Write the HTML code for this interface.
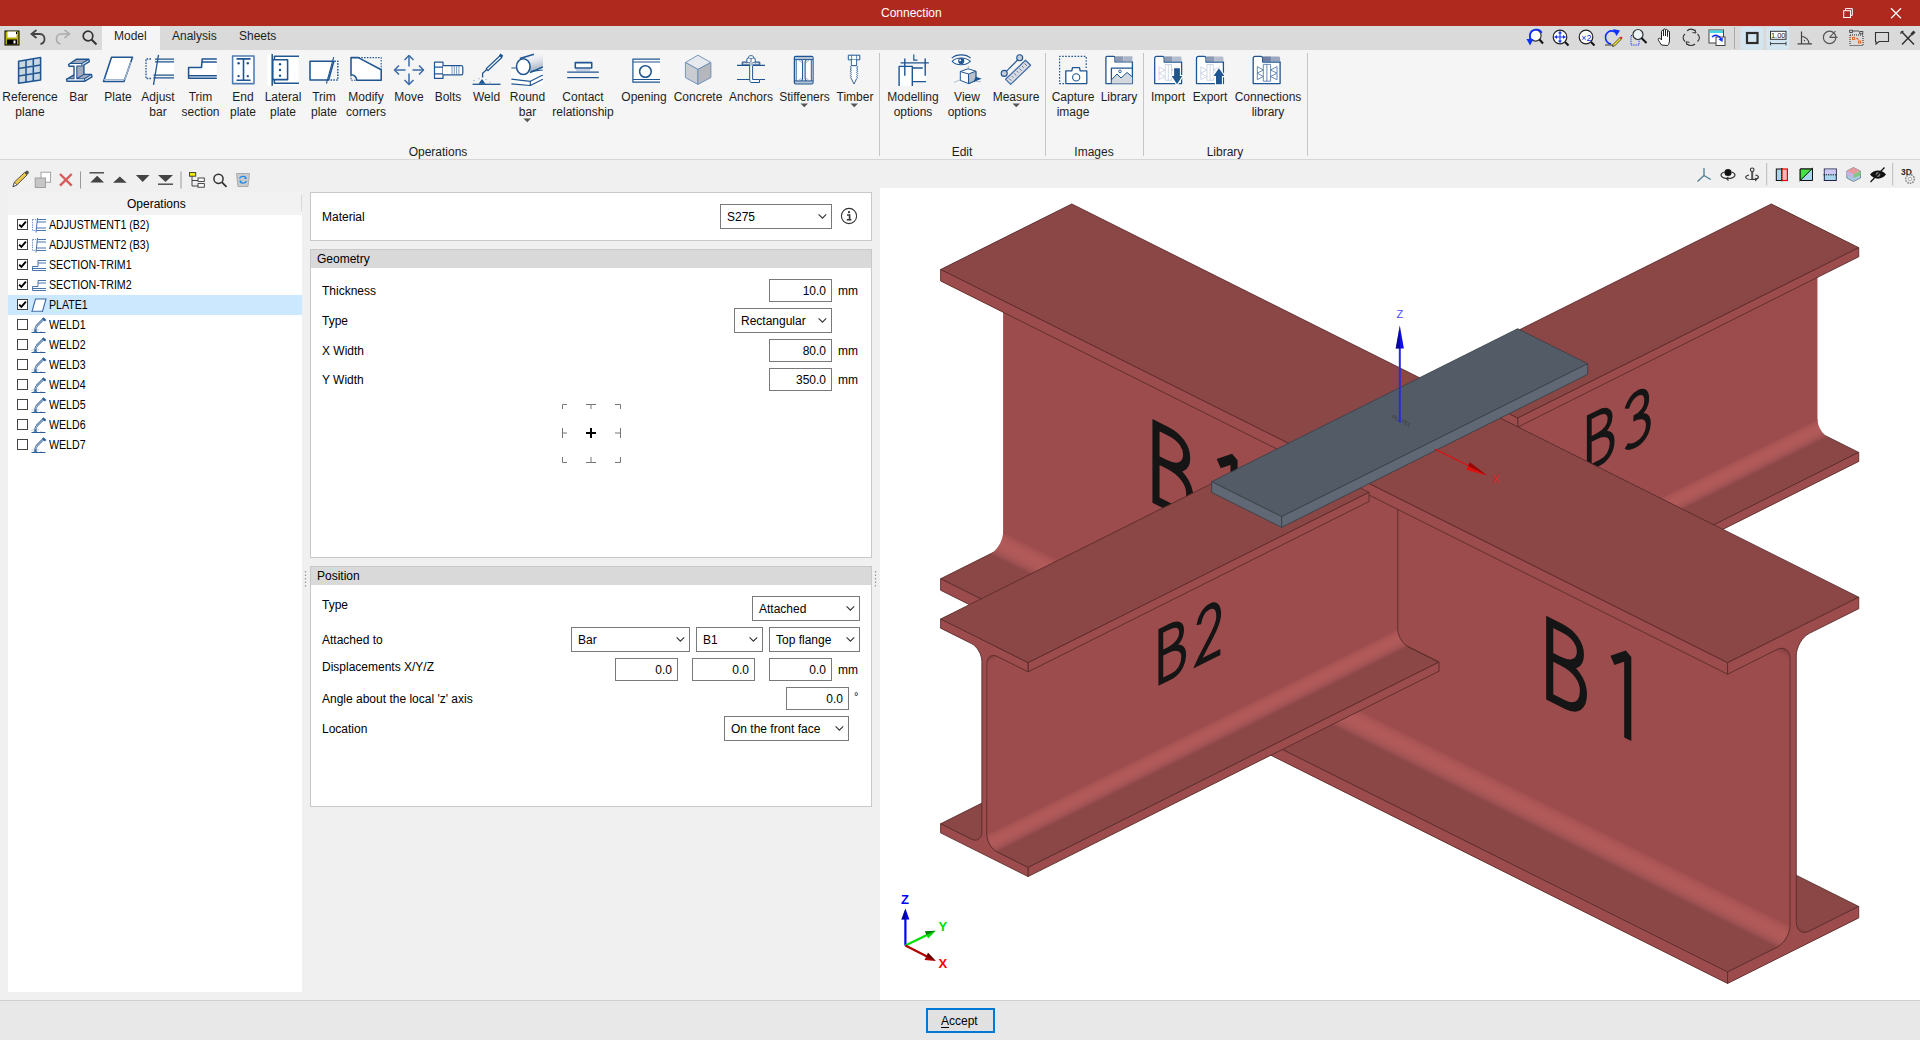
<!DOCTYPE html>
<html><head><meta charset="utf-8">
<style>
*{margin:0;padding:0;box-sizing:border-box}
html,body{width:1920px;height:1040px;overflow:hidden;background:#f0f0f0;font-family:"Liberation Sans",sans-serif;font-size:12px;color:#000}
.a{position:absolute}
svg.a{overflow:visible}
.t{position:absolute;white-space:nowrap;line-height:14px}
.rb{position:absolute;top:90px;width:100px;margin-left:-50px;text-align:center;line-height:15px;color:#1e1e1e;white-space:nowrap}
.grp{position:absolute;top:145px;width:120px;margin-left:-60px;text-align:center;color:#1e1e1e;line-height:14px}
.sep{position:absolute;top:53px;width:1px;height:103px;background:#c6c6c6}
.pan{position:absolute;background:#fff;border:1px solid #c8c8c8}
.hdr{position:absolute;background:#d9d9d9}
.inp{position:absolute;background:#fff;border:1px solid #7a7a7a;width:63px;height:23px}
.inp span{position:absolute;right:5px;top:4px;line-height:14px}
.cmb{position:absolute;background:#fff;border:1px solid #7a7a7a;height:25px}
.cmb span{position:absolute;left:6px;top:5px;line-height:14px}
.cmb i{position:absolute;right:5px;top:8px;width:10px;height:7px;background:no-repeat}
.cb{position:absolute;left:17px;width:11px;height:11px;border:1px solid #444;background:#fff}
.lt{position:absolute;left:49px;line-height:14px;transform:scaleX(0.885);transform-origin:0 0;white-space:nowrap}
.ic{position:absolute}
</style></head><body>
<svg width="0" height="0" style="position:absolute">
<defs>
<symbol id="chev" viewBox="0 0 10 7"><path d="M1.6,1.3 L5.4,5.1 L9.2,1.3" fill="none" stroke="#333" stroke-width="1.1"/></symbol>
<symbol id="chk" viewBox="0 0 11 11"><path d="M2.2,5.6 L4.4,7.9 L8.9,2.6" fill="none" stroke="#000" stroke-width="1.9"/></symbol>
<symbol id="weld" viewBox="0 0 16 16"><path d="M12.8,1.8 L6.2,8.3 C5,9.5 4.5,10.6 4.4,13.5" stroke="#2a5c96" stroke-width="2.3" fill="none"/><path d="M12.4,2.2 L6.2,8.3 C5.2,9.3 4.9,10.4 4.8,12.5" stroke="#fff" stroke-width="0.8" fill="none"/><path d="M11.8,1 L14.6,3.8" stroke="#2a5c96" stroke-width="2"/><path d="M0.5,15.5 H14.5" stroke="#2a5c96" stroke-width="1"/><path d="M2.3,14.8 L4.4,12.6 L6.6,14.8 Z" fill="#2a5c96"/><path d="M0.5,13.2 h1.2 M3,11.5 v1.5 M7.2,12 v1.5 M9.5,14.6 h1" stroke="#7a9cc6" stroke-width="0.7"/></symbol>
</defs></svg>

<!-- title bar -->
<div class="a" style="left:0;top:0;width:1920px;height:26px;background:#b0291e"></div>
<div class="t" style="left:881px;top:6px;color:#fff">Connection</div>
<svg class="a" style="left:1838px;top:6px" width="16" height="14"><rect x="5.7" y="4.7" width="6.8" height="6.8" fill="none" stroke="#fff" stroke-width="1"/><path d="M7.5,4.5 V2.6 H14.3 V9.4 H12.6" fill="none" stroke="#fff" stroke-width="1"/></svg>
<svg class="a" style="left:1888px;top:6px" width="14" height="14"><path d="M3,2.3 L13,12.2 M13,2.3 L3,12.2" stroke="#fff" stroke-width="1.2"/></svg>

<!-- tab strip -->
<div class="a" style="left:0;top:26px;width:1920px;height:24px;background:#dadada"></div>
<div class="a" style="left:102px;top:26px;width:58px;height:24px;background:#f5f5f5"></div>
<div class="t" style="left:114px;top:29px;color:#1e1e1e">Model</div>
<div class="t" style="left:172px;top:29px;color:#1e1e1e">Analysis</div>
<div class="t" style="left:239px;top:29px;color:#1e1e1e">Sheets</div>
<!-- quick access -->
<svg class="a" style="left:4px;top:30px" width="16" height="16"><rect x="1" y="1" width="14" height="14" fill="#b8b000" stroke="#000" stroke-width="1"/><rect x="3.5" y="1.5" width="9" height="6" fill="#fff"/><rect x="3" y="9.5" width="10" height="5" fill="#000"/><rect x="9.5" y="10.5" width="2" height="3" fill="#fff"/><rect x="12" y="2" width="1" height="2" fill="#000"/></svg>
<svg class="a" style="left:29px;top:29px" width="18" height="18"><path d="M4,5 H11 C14,5 15.5,7.5 15.5,10 C15.5,12.5 14,14.5 11.5,15" fill="none" stroke="#444" stroke-width="1.8"/><path d="M7.5,1 L2.5,5 L7.5,9" fill="none" stroke="#444" stroke-width="1.8"/></svg>
<svg class="a" style="left:54px;top:29px" width="18" height="18"><path d="M14,5 H7 C4,5 2.5,7.5 2.5,10 C2.5,12.5 4,14.5 6.5,15" fill="none" stroke="#aaa" stroke-width="1.6"/><path d="M10.5,1 L15.5,5 L10.5,9" fill="none" stroke="#aaa" stroke-width="1.6"/></svg>
<svg class="a" style="left:81px;top:29px" width="18" height="18"><circle cx="7" cy="7" r="4.8" fill="none" stroke="#333" stroke-width="1.7"/><path d="M10.5,10.5 L15.5,15.5" stroke="#333" stroke-width="1.9"/></svg>

<!-- right toolbar in tab strip -->
<!-- right toolbar in tab strip -->
<svg class="a" style="left:1520px;top:26px" width="400" height="24" viewBox="1520 26 400 24">
<!-- 1 zoom previous -->
<circle cx="1535.5" cy="35.5" r="5.6" fill="#fff" stroke="#333" stroke-width="1.2"/>
<path d="M1539.5,39.5 L1543,43.5" stroke="#111" stroke-width="2"/>
<path d="M1541.5,33 C1540,28 1531,28.5 1530,35 L1530,41.5" fill="none" stroke="#1030ff" stroke-width="1.8"/>
<path d="M1526.5,39 L1530,45.5 L1533.5,39 Z" fill="#1030ff"/>
<!-- 2 zoom all -->
<circle cx="1560" cy="37" r="6.8" fill="#fff" stroke="#222" stroke-width="1.2"/>
<path d="M1565,42 L1568.5,45.5" stroke="#111" stroke-width="2"/>
<path d="M1560,31.5 V42.5 M1554.5,37 H1565.5" stroke="#1030ff" stroke-width="1.1"/>
<path d="M1558,33.5 L1560,31 L1562,33.5 Z M1558,40.5 L1560,43 L1562,40.5 Z M1557,35 L1554.5,37 L1557,39 Z M1563,35 L1565.5,37 L1563,39 Z" fill="#1030ff"/>
<!-- 3 zoom x2 -->
<circle cx="1586" cy="37" r="6.8" fill="#fff" stroke="#222" stroke-width="1.2"/>
<path d="M1591,42 L1594.5,45.5" stroke="#111" stroke-width="2"/>
<text x="1586.5" y="40.5" font-family="Liberation Sans" font-size="9" fill="#1030ff" text-anchor="middle">×2</text>
<!-- 4 redraw -->
<path d="M1615,32 C1610,29 1605.5,33 1605.5,37 C1605.5,41 1608,43.5 1611,44" fill="none" stroke="#1030ff" stroke-width="1.6"/>
<path d="M1613,29 L1620,30.5 L1616.5,36 Z" fill="#1030ff"/>
<path d="M1605,45 H1614" stroke="#333" stroke-width="1"/>
<path d="M1613,44.5 L1620,37.5 L1621.5,39 L1614.5,46 L1612.5,46.5 Z" fill="#f0e020" stroke="#333" stroke-width="0.8"/>
<path d="M1619.5,37.5 L1621.3,36.5 L1622.5,37.7 L1621.5,39.2 Z" fill="#e02020"/>
<!-- 5 zoom window -->
<rect x="1631" y="35.5" width="8" height="9.5" fill="none" stroke="#1030ff" stroke-width="1" stroke-dasharray="1.2,1"/>
<circle cx="1638" cy="34.5" r="5" fill="#ecf4f8" stroke="#333" stroke-width="1.2"/>
<path d="M1641.5,38 L1646.5,43" stroke="#111" stroke-width="2"/>
<!-- 6 hand -->
<path d="M1661.5,45 C1659.5,42 1657.5,39.5 1658.5,38.5 C1659.5,37.5 1661,39 1661.5,40 V31.5 C1661.5,30 1663.5,30 1663.5,31.5 V36 V30 C1663.5,28.5 1665.5,28.5 1665.5,30 V36 V30.5 C1665.5,29 1667.5,29 1667.5,30.5 V36.5 V32 C1667.5,30.5 1669.5,30.5 1669.5,32 V40 C1669.5,43 1668.5,44.5 1667.5,45.5 Z" fill="#fff" stroke="#222" stroke-width="1"/>
<!-- 7 rotate -->
<path d="M1687,31 C1689,28.5 1693,28.5 1695,31 M1697.5,34 C1700,36 1700,39.5 1697.5,41.5 M1695,44 C1693,46 1689,46 1687,44 M1685,41.5 C1682.5,39.5 1682.5,36 1685,34" fill="none" stroke="#333" stroke-width="1.1"/>
<path d="M1695,29.5 L1696,33 L1692.5,32.5 M1687,45 L1686,41.8 L1689.5,42.3" fill="none" stroke="#333" stroke-width="1"/>
<!-- 8 window arrow -->
<rect x="1709" y="30" width="14.5" height="13" fill="#fff" stroke="#444" stroke-width="1"/>
<rect x="1709.5" y="30.5" width="13.5" height="2.5" fill="#40d8e8"/>
<rect x="1716" y="37" width="9" height="8.5" fill="#fff" stroke="#444" stroke-width="1"/>
<path d="M1712,37 C1715,34 1719,35.5 1721,39" fill="none" stroke="#1030ff" stroke-width="1.5"/>
<path d="M1718.5,39.5 L1722.5,42 L1722.8,37.5 Z" fill="#1030ff"/>
<!-- separator -->
<rect x="1734" y="27" width="1" height="22" fill="#aaa"/>
<!-- 9 highlighted square -->
<rect x="1740.5" y="27" width="22.5" height="22.8" rx="3" fill="#d4e6f1"/>
<rect x="1747" y="33" width="10.5" height="10" fill="none" stroke="#2d2d2d" stroke-width="2.2"/>
<!-- 10 highlighted 1.00 -->
<rect x="1766.5" y="27" width="22.8" height="22.8" rx="3" fill="#d4e6f1"/>
<rect x="1770.5" y="31.3" width="15.5" height="8" fill="#fff" stroke="#333" stroke-width="1"/>
<text x="1778.2" y="38.2" font-family="Liberation Sans" font-size="7.5" fill="#222" text-anchor="middle">1.00</text>
<path d="M1770.5,43.6 H1786 M1770.5,41.8 V45.4 M1786,41.8 V45.4" stroke="#333" stroke-width="0.9"/>
<!-- 11 angle -->
<path d="M1801.5,31.5 V43.8 M1797.5,43.8 H1812" stroke="#444" stroke-width="1.2" fill="none"/>
<path d="M1801.5,36.5 C1805.5,36.5 1809,40 1809,43.8" fill="none" stroke="#444" stroke-width="1.1"/>
<circle cx="1804.5" cy="40.5" r="0.7" fill="#444"/>
<!-- 12 circle -->
<circle cx="1829.6" cy="37.4" r="6.2" fill="none" stroke="#555" stroke-width="1.2"/>
<path d="M1829.6,37.4 H1837.5 M1829.6,37.4 L1835.5,31" stroke="#555" stroke-width="1.1"/>
<!-- 13 dotted rect -->
<rect x="1849.7" y="30.2" width="2.8" height="2.3" fill="none" stroke="#333" stroke-width="0.8"/>
<rect x="1859.8" y="31.5" width="3" height="2.3" fill="none" stroke="#333" stroke-width="0.8"/>
<path d="M1853,31 H1859" stroke="#333" stroke-width="0.8"/>
<rect x="1850" y="35" width="13" height="10.5" fill="none" stroke="#222" stroke-width="1" stroke-dasharray="1,1"/>
<rect x="1852.5" y="37.5" width="2.2" height="2" fill="none" stroke="#e06020" stroke-width="0.9"/>
<rect x="1858.5" y="41" width="2.2" height="2" fill="none" stroke="#e06020" stroke-width="0.9"/>
<path d="M1856,38.5 H1858 V40" fill="none" stroke="#e06020" stroke-width="0.9"/>
<!-- 14 speech -->
<path d="M1875.5,32.5 H1888.5 V41.5 H1879 L1876,44 V41.5 H1875.5 Z" fill="none" stroke="#333" stroke-width="1.1"/>
<!-- 15 tools -->
<path d="M1902,32 L1914,44.5 M1913.5,32.5 L1902,44.5" stroke="#333" stroke-width="1.5"/>
<path d="M1911.5,34.5 L1914.5,31.5" stroke="#333" stroke-width="2.8"/>
<path d="M1901,34 C1900.5,32 1902,30.8 1903.5,31.5" fill="none" stroke="#333" stroke-width="1.2"/>
</svg>

<!-- left toolbar -->
<svg class="a" style="left:0;top:164px" width="260" height="28" viewBox="0 164 260 28">
<path d="M13,186.8 L14.5,182 L24.5,172.5 L27,175 L17,184.8 Z" fill="#ecc94b" stroke="#444" stroke-width="0.9"/>
<path d="M13,186.8 L14.5,182.2 L17,184.8 Z" fill="#fff" stroke="#444" stroke-width="0.8"/>
<path d="M24.5,172.5 L26,171 C26.5,170.5 27.5,170.5 28,171 L28.5,171.5 C29,172 29,173 28.5,173.5 L27,175 Z" fill="#555"/>
<rect x="41" y="172.2" width="9.6" height="10" fill="#fff" stroke="#999" stroke-width="0.9"/>
<rect x="35.2" y="178" width="10.2" height="9.5" fill="#c4c6c8" stroke="#999" stroke-width="0.9"/>
<path d="M60,174 L71.7,185.7 M71.7,174 L60,185.7" stroke="#d85c5c" stroke-width="2.4"/>
<rect x="80" y="171.5" width="1" height="17" fill="#999"/>
<path d="M89.5,172.8 H104" stroke="#444" stroke-width="1.4"/>
<path d="M90.3,182.5 L97.2,175.8 L104,182.5 Z" fill="#444"/>
<path d="M113,182.8 L119.8,176.4 L126.7,182.8 Z" fill="#444"/>
<path d="M135.9,175.1 L142.7,182.1 L149.5,175.1 Z" fill="#444"/>
<path d="M158,175.1 L165.5,182 L173,175.1 Z" fill="#444"/>
<path d="M158,184.2 H173" stroke="#444" stroke-width="1.4"/>
<rect x="180.5" y="171.5" width="1" height="17" fill="#999"/>
<rect x="189.5" y="172.6" width="6.2" height="3.6" fill="#f0f000" stroke="#333" stroke-width="0.9"/>
<path d="M192,176.3 V186 H198 M192,180.5 H198" fill="none" stroke="#333" stroke-width="0.9"/>
<rect x="198" y="178" width="6.3" height="3.4" fill="#fff" stroke="#333" stroke-width="0.9"/>
<rect x="198" y="183.6" width="6.3" height="3.6" fill="#fff" stroke="#333" stroke-width="0.9"/>
<circle cx="218.5" cy="178.8" r="4.6" fill="none" stroke="#333" stroke-width="1.5"/>
<path d="M221.8,182.2 L226.5,186.8" stroke="#333" stroke-width="1.8"/>
<path d="M236.5,173.5 H249.5 L248,186.5 H238 Z" fill="#c8cacc" stroke="#a4a6a8" stroke-width="0.9"/>
<path d="M239.5,178.5 C240.5,176 245,175.5 246,178 M246.5,181 C245.5,183.5 241,184 240,181.5" fill="none" stroke="#1e88e5" stroke-width="1.3"/>
<path d="M245,176.5 L247,178.8 L244.3,179 Z M241,183 L239,180.7 L241.7,180.5 Z" fill="#1e88e5"/>
</svg>

<!-- viewport toolbar -->
<svg class="a" style="left:1680px;top:160px" width="240" height="28" viewBox="1680 160 240 28">
<path d="M1704,168 V175.5 L1697.5,181.5 M1704,175.5 L1710.7,179.5" fill="none" stroke="#4b7d96" stroke-width="1.3"/>
<circle cx="1728" cy="172.5" r="3.6" fill="#111"/>
<path d="M1724.5,172 C1719,173.5 1720,178.5 1728,178.5 C1736,178.5 1737,173.5 1731.5,172" fill="none" stroke="#333" stroke-width="1.2"/>
<path d="M1728.5,176.8 L1726.5,178.5 L1728.5,180.5" fill="none" stroke="#333" stroke-width="1.1"/>
<circle cx="1752.2" cy="169.8" r="1.8" fill="none" stroke="#333" stroke-width="1.1"/>
<path d="M1752.2,171.5 V180" stroke="#555" stroke-width="2"/>
<path d="M1749,175 C1744,176 1744.5,179.5 1752,179.5 C1759.5,179.5 1760,176 1755.5,175" fill="none" stroke="#333" stroke-width="1.2"/>
<path d="M1755,178 L1757,179.5 L1755,181" fill="none" stroke="#333" stroke-width="1"/>
<rect x="1766.2" y="163" width="1" height="22.5" fill="#bbb"/>
<rect x="1776.3" y="169" width="5.5" height="11.5" fill="#a8d4ec" stroke="#111" stroke-width="1"/>
<rect x="1781.8" y="169" width="5.6" height="11.5" fill="#f4b8b8" stroke="#e00" stroke-width="1.2"/>
<path d="M1781.8,168 V181.5" stroke="#111" stroke-width="1" stroke-dasharray="1.2,1"/>
<path d="M1800.2,169 H1812.5 V180.5 H1800.2 Z" fill="#a8d4ec" stroke="#111" stroke-width="1"/>
<path d="M1800.2,180.5 V169 H1812.5 Z" fill="#44e044"/>
<path d="M1800.2,169 H1812.5 M1800.2,169 V180.5 M1799.5,181.2 L1813,167.8" stroke="#111" stroke-width="1" fill="none"/>
<rect x="1824.3" y="169" width="12" height="11.5" fill="#a8d4ec" stroke="#224" stroke-width="1"/>
<rect x="1824.8" y="169.5" width="11" height="4.8" fill="#cfc8f4"/>
<path d="M1823.5,174.8 H1837" stroke="#111" stroke-width="1" stroke-dasharray="1.3,1"/>
<path d="M1853.5,167.5 L1860.5,171 V178 L1853.5,181.5 L1846.8,178 V171 Z" fill="#a8cce4" stroke="#6a7a8a" stroke-width="0.8"/>
<path d="M1853.5,167.5 L1860.5,171 L1853.5,174.3 L1846.8,171 Z" fill="#e89a9a"/>
<path d="M1846.8,171 V175 L1853.5,178.3 V174.3 Z" fill="#c8b0e8"/>
<path d="M1860.5,171 V175 L1853.5,178.3 V174.3 Z" fill="#80c880"/>
<path d="M1870,174.5 C1874,169 1882,169 1886,174.5 C1882,180 1874,180 1870,174.5 Z" fill="#111"/>
<circle cx="1878" cy="174.5" r="2.4" fill="#777"/>
<path d="M1870.5,182 L1884.5,167.5" stroke="#111" stroke-width="1.2"/>
<rect x="1892.2" y="163" width="1" height="22.5" fill="#bbb"/>
<text x="1901" y="175" font-family="Liberation Sans" font-weight="bold" font-size="8.5" fill="#222">3D</text>
<circle cx="1910" cy="179" r="4.3" fill="none" stroke="#888" stroke-width="1.6" stroke-dasharray="1.6,1"/>
<circle cx="1910" cy="179" r="1.8" fill="none" stroke="#aaa" stroke-width="0.9"/>
</svg>


<!-- ribbon -->
<div class="a" style="left:0;top:50px;width:1920px;height:109px;background:#f5f5f5"></div>
<div class="a" style="left:0;top:159px;width:1920px;height:1px;background:#d6d6d6"></div>
<svg class="a" style="left:0;top:50px" width="1920" height="110" viewBox="0 50 1920 110">
<g fill="none" stroke="#1f5591" stroke-width="1.55" stroke-linejoin="round">
<!-- Reference plane -->
<path d="M18.6,61.3 L40.6,57.6 V79.9 L18.6,83.2 Z" fill="#c9d6e4"/>
<path d="M26,60.1 V82.1 M33.3,58.8 V81 M18.6,68.6 L40.6,65.1 M18.6,75.9 L40.6,72.5"/>
<!-- Bar -->
<path d="M69.4,63.5 L76.5,59.2 H88.8 L81.7,63.5 Z M76.8,66 L83.9,61.7 V74.4 L76.8,78.7 Z M76.8,78.7 L83.9,74.4 H91.4 L84.3,78.7 Z M66.5,79.3 L74,74.8 V78.7 Z" fill="#a2aabb" stroke="none"/>
<path d="M81.7,63.5 L88.8,59.2 L89.3,61.7 L82.2,66 Z M84.3,78.7 L91.4,74.4 L92,76.9 L84.9,81.2 Z" fill="#dfe3ea" stroke="none"/>
<path d="M69.4,63.5 H81.7 L82.2,66 H76.8 V78.7 H84.3 L84.9,81.2 H67 L66.5,79.3 H74 V66.2 H69 Z" fill="#fff" stroke="none"/>
<path d="M69,66.2 L68.6,64.5 L76.5,59.2 H88.8 L89.3,61.7 L83.9,65 V74.4 H91.4 L92,76.9 L84.9,81.2 H67 L66.5,79.3 L74,74.8 V66.2 Z" stroke-width="1.4"/>
<path d="M69.4,63.5 H81.7 L88.8,59.2 M81.7,63.5 L82.2,66 H76.8 V78.7 L83.9,74.4 M76.8,78.7 H84.3 L91.4,74.4 M84.3,78.7 L84.9,81.2 M74,74.8 V78.7 H66.5" stroke-width="1.1"/>
<!-- Plate -->
<path d="M111.5,57.3 H132.5 L124,81.4 H103.5 Z" fill="#fff"/>
<path d="M103.7,79.7 H124.3 M130.7,62 L124.8,79.7" stroke="#a4b6cf" stroke-width="1.2"/>
<!-- Adjust bar -->
<path d="M155,62.5 H174 V74.5 H153.5 Z" fill="#fff" stroke="none"/>
<path d="M151,59 H146 V78.5 H151" stroke-dasharray="1.6,1.2" stroke-linejoin="miter" stroke-width="1.3"/>
<path d="M155,59.2 H174 M155,61.8 H174 M153.5,75.2 H174 M153.3,77.8 H174" stroke-width="1.2"/>
<path d="M158.5,54.8 L153.5,84.8" stroke-width="1.3"/>
<!-- Trim section -->
<path d="M188.6,67.5 H201.5 L202.2,59 H216.8 V78.3 H188.6 Z" fill="#fff" stroke="none"/>
<path d="M216.8,59 H202.2 L201.5,67.4 H188.6 V78.3 H216.8 M202.5,62 H216.8 M188.8,75.7 H216.8"/>
<!-- End plate -->
<rect x="232.6" y="56" width="21.4" height="27.6" fill="#fff" stroke="#4f7bb0"/>
<path d="M236.5,58.9 H250.6 M236.5,80.2 H250.6 M243.5,58.9 V80.2" stroke-width="1.6"/>
<g fill="#1f5591" stroke="none"><circle cx="238.6" cy="63.3" r="1.2"/><circle cx="247.8" cy="63.3" r="1.2"/><circle cx="238.6" cy="76.1" r="1.2"/><circle cx="247.8" cy="76.1" r="1.2"/></g>
<!-- Lateral plate -->
<rect x="267.5" y="54.5" width="31" height="31" fill="#fff" stroke="none"/>
<path d="M272.2,54 V85.8 M299,56.3 H274.4 V59.4 M299,83.2 H274.4 V79.5"/>
<rect x="272.8" y="59.8" width="14.8" height="19.8" fill="#fff"/>
<g fill="#1f5591" stroke="none"><circle cx="280" cy="64.2" r="1.2"/><circle cx="280" cy="70" r="1.2"/><circle cx="280" cy="75.7" r="1.2"/></g>
<!-- Trim plate -->
<path d="M310,61.2 H333.8 L328.6,80 H310 Z" fill="#fff"/>
<path d="M333.7,57.2 L326.4,83.7" stroke-width="1.1"/>
<path d="M334.3,61.2 H337.8 V80 H329" stroke-dasharray="1.5,1.3"/>
<!-- Modify corners -->
<path d="M351,57.6 H358.3 L381.2,69.7 V80.3 H356.7 C356.7,77.2 354.2,74.7 351,74.7 Z" fill="#fff"/>
<path d="M358.5,57.6 H381.2 V69.5 M351,75 V80.3 H356.5" stroke-dasharray="1.5,1.3" stroke-width="1.1"/>
<!-- Move -->
<g stroke="#3b69a6" stroke-width="1.5">
<path d="M409,55.8 V66.5 M409,73.5 V84 M394.8,70 H405.5 M412.5,70 H423.2"/>
<path d="M404.5,60 L409,55.5 L413.5,60 M404.5,80 L409,84.5 L413.5,80 M399,65.5 L394.5,70 L399,74.5 M419,65.5 L423.5,70 L419,74.5"/>
</g>
<!-- Bolts -->
<path d="M434.5,62.2 H443 V78.4 H434.5 Z M434.5,67.2 H443 M434.5,73.8 H443" fill="#fff" stroke-width="1.2"/>
<path d="M443,65.6 H461.5 C462.5,65.6 462.8,66.5 462.8,67.5 V73 C462.8,74 462.5,74.9 461.5,74.9 H443" fill="#fff" stroke-width="1.2"/>
<path d="M452,65.8 V74.8 M454.3,65.8 V74.8 M456.6,65.8 V74.8 M458.9,65.8 V74.8" stroke-width="0.8" stroke="#5a82b5"/>
<!-- Weld -->
<path d="M501.8,57.5 L488,70.5 L486.2,68.8 L500,55.7 Z" fill="#fff" stroke-width="1.2"/>
<path d="M502.5,56.8 L499.7,54.5" stroke-width="2.6"/>
<path d="M486.8,69.6 L482.6,73.2 V77.5" stroke-width="1.3"/>
<path d="M472.6,84.3 H500.5" stroke-width="1.3"/>
<path d="M478.5,83.8 L482,79 L485.5,83.8 Z" fill="#1f5591" stroke="none"/>
<path d="M473.5,80.6 h1.2 M478.5,78.7 h1 M485.5,79.6 h1 M489.5,82.2 h1" stroke-width="0.9" stroke="#6a8fc0"/>
<!-- Round bar -->
<path d="M511.4,68 L529,62 V66 L542.8,66.5 V84 L532,85.5 L511.4,84 Z" fill="#fff" stroke="none"/>
<path d="M519.5,58.3 L534.2,54 L543,54.5 V67.5 L530,72.5 Z" fill="url(#rbg)" stroke="none"/>
<path d="M519.8,58.5 L534,54.2 M530,72.6 L542.8,67"/>
<ellipse cx="523.3" cy="66.6" rx="6.8" ry="7.9" fill="#fff"/>
<path d="M511.4,68 H516.5 M511.4,79.2 L530.3,81.3 L542.8,75 M511.4,83.8 L530.3,85.5 L542.8,79.2 M530.3,81.3 V85.5 M531,71.4 L542.8,70" stroke-width="1.2"/>
<!-- Contact -->
<rect x="575.3" y="62.6" width="16.4" height="5.3" fill="#fff"/>
<path d="M567.2,72.1 H598.8 M567.2,77.6 H598.8" stroke-width="1.3"/>
<path d="M577,68.5 V71.5 M579,68.5 V71.5 M581,68.5 V71.5 M583,68.5 V71.5 M585,68.5 V71.5 M587,68.5 V71.5 M589,68.5 V71.5" stroke-width="0.7" stroke="#6a8fc0"/>
<!-- Opening -->
<rect x="632.8" y="58.8" width="27.2" height="23.6" fill="#fff" stroke="none"/>
<path d="M660,59.2 H632.9 V82.2 H660 M633,62 H660 M633,79.5 H660" stroke-width="1.2"/>
<path d="M633,62.5 H660 V79 H633 Z" fill="none" stroke="none"/>
<circle cx="645.4" cy="71.5" r="5.8"/>
<!-- Concrete -->
<path d="M697.9,55.2 L710.9,62.5 L697.9,69.4 L685.4,62.5 Z" fill="#e6eaee" stroke="#6a8cb8" stroke-width="0.9"/>
<path d="M685.4,62.5 V77.6 L697.9,84.4 V69.4 Z" fill="#c9ccd0" stroke="#6a8cb8" stroke-width="0.9"/>
<path d="M710.9,62.5 V77.6 L697.9,84.4 V69.4 Z" fill="#b4b8bd" stroke="#6a8cb8" stroke-width="0.9"/>
<!-- Anchors -->
<path d="M737,65.3 H765 M737,79.5 H749.7 M759.5,79.5 H765" stroke-width="1.2"/>
<path d="M749.7,65.7 V80.3 C749.7,81.8 750.5,82.5 752,82.5 H759.5 V79.5 H752.6 V65.7" fill="#fff" stroke-width="1"/>
<rect x="742.2" y="62" width="17.6" height="3" fill="#a9b6c9" stroke-width="1"/>
<path d="M744,63.5 h2 M747,63.5 h2 M753,63.5 h2 M756,63.5 h2" stroke="#fff" stroke-width="0.6"/>
<rect x="750" y="61.5" width="2.6" height="4.5" fill="#b8c4d6" stroke="none"/>
<path d="M746.9,62 V59.2 C746.9,58.4 747.4,58 748.2,58 H753.9 C754.6,58 755.2,58.4 755.2,59.2 V62" fill="#fff" stroke-width="1"/>
<path d="M748.7,58 V56.8 C748.7,56 749.3,55.7 751,55.7 C752.7,55.7 753.3,56 753.3,56.8 V58 M751,58 V62" fill="#fff" stroke-width="0.9"/>
<!-- Stiffeners -->
<rect x="794.4" y="56.4" width="18.6" height="27.4" rx="1.2" fill="#fff" stroke-width="1.3"/>
<path d="M795,57 H812.5 V59.3 H795 Z M795,81 H812.5 V83.3 H795 Z M811.4,59.5 H812.6 V81 H811.4 Z" fill="#b4c2d4" stroke="none"/>
<path d="M794.6,59.6 H813 M794.6,80.9 H813" stroke-width="1"/>
<path d="M796.2,59.6 V80.9 M811.3,59.6 V80.9" stroke-width="0.9"/>
<path d="M801.2,59.6 C802.3,60.3 802.6,61 802.6,62 V78.5 C802.6,79.5 802.3,80.2 801.2,80.9 M806.4,59.6 C805.3,60.3 805.1,61 805.1,62 V78.5 C805.1,79.5 805.3,80.2 806.4,80.9" stroke-width="1.1"/>
<path d="M798.5,60 L801.5,62.5 M798.5,80.5 L801.5,78 M809,60 L806,62.5 M809,80.5 L806,78" stroke-width="0.7" stroke="#6a8cb8"/>
<!-- Timber -->
<path d="M848.3,55.2 H859.8 V59.8 H848.3 Z" fill="#fff" stroke-width="1"/>
<path d="M851.6,55.2 V59.8 M856.6,55.2 V59.8" stroke-width="0.7"/>
<path d="M851.4,59.8 V65.7 H856.6 V59.8" fill="#fff" stroke-width="0.9"/>
<path d="M851.4,65.7 L850.3,66.8 L851.4,67.9 L850.3,69 L851.4,70.1 L850.3,71.2 L851.4,72.3 L850.3,73.4 L851.4,74.5 L850.3,75.6 L851.4,76.7 L850.5,77.8 L851.6,78.9 L852.5,81 L854,84 L855.5,81 L856.4,78.9 L857.5,77.8 L856.6,76.7 L857.7,75.6 L856.6,74.5 L857.7,73.4 L856.6,72.3 L857.7,71.2 L856.6,70.1 L857.7,69 L856.6,67.9 L857.7,66.8 L856.6,65.7 Z" fill="#fff" stroke-width="0.9"/>
<!-- Modelling options -->
<rect x="899" y="66.2" width="13.3" height="19.5" fill="#fff" stroke="none"/>
<rect x="912.3" y="68" width="13.7" height="13.6" fill="#fff" stroke="none"/>
<path d="M899.1,85.9 V66.4 H912.3 V85.9 M900.6,62.9 H928.8 M904.8,58.5 V75.8 M925.2,58.5 V75.8 M912.3,68 H922.8 M912.3,81.6 H926" stroke-width="1.4"/>
<path d="M913.8,54.5 V60.2 H917.5" stroke-width="1.2"/>
<!-- View options -->
<path d="M952.2,61.3 C956.5,56.8 965.7,56.8 970.3,61.3 C965.7,65.8 956.5,65.8 952.2,61.3 Z" fill="#fff" stroke-width="1.1"/>
<path d="M951.8,58.2 C956.5,53.8 965.8,53.8 970.7,58.2" stroke-width="1.1"/>
<circle cx="961.2" cy="61" r="3.1" fill="#1f5591" stroke="none"/><circle cx="960.2" cy="60.2" r="1" fill="#fff" stroke="none"/>
<path d="M968.3,66 V68.5" stroke="#9aa8bc" stroke-width="0.8"/>
<path d="M954,82.5 L960.3,79.8 M976,81.5 L981,81.7" stroke="#9aa8bc" stroke-width="0.7"/>
<path d="M960.3,71.5 L968,68.8 L975.9,71.2 V80.5 L968.7,83.6 L960.3,80.4 Z" fill="#fff" stroke-width="1"/>
<path d="M968.5,74 L975.9,71.2 V80.5 L968.7,83.6 Z" fill="#b8c0cc" stroke-width="1"/>
<path d="M960.3,71.5 L968.5,74 V83.6" stroke-width="1"/>
<path d="M973,82.2 L981.8,78.8 L975.9,76.7" fill="#1f5591" stroke="none"/>
<!-- Measure -->
<path d="M1005.6,79.3 L1025.5,60.2 L1030.6,65.2 L1010.7,84.4 Z" fill="#d9dbde" stroke="#3c6aa8" stroke-width="1.2"/>
<path d="M1009,78.5 l2.2,2.2 M1011.6,76 l1.6,1.6 M1014.2,73.5 l2.2,2.2 M1016.8,71 l1.6,1.6 M1019.4,68.5 l2.2,2.2 M1022,66 l1.6,1.6 M1024.6,63.5 l2.2,2.2" stroke="#3c6aa8" stroke-width="0.9"/>
<path d="M1004.3,73.4 L1019.7,57.9" stroke-width="1.1"/>
<circle cx="1004.2" cy="73.4" r="3" fill="#c6ccd6" stroke-width="1.1"/><circle cx="1019.7" cy="57.8" r="3" fill="#c6ccd6" stroke-width="1.1"/>
<!-- Capture image -->
<path d="M1064,83.6 H1059.6 V56.4 H1086.2 V68" stroke-dasharray="1.6,1.5" stroke-width="1.2"/>
<path d="M1065.8,70.8 H1071.8 L1072.5,67.7 H1079.5 L1080.2,70.8 H1086.8 V83.6 H1065.8 Z" fill="#fff" stroke-width="1.3"/>
<circle cx="1076.2" cy="77.4" r="3.6" stroke-width="1.1"/>
<!-- Library (images) -->
<path d="M1105.9,83.6 V57.5 C1105.9,56.8 1106.4,56.3 1107,56.3 H1113.7 C1114.5,56.3 1115,56.9 1115,57.7 V61.9 H1132.4 V83.6 Z" fill="#fff" stroke-width="1.3"/>
<path d="M1115.3,56.3 H1123.5 V61.5 H1115.3 Z" fill="#8c9ab4" stroke="none"/>
<path d="M1123.8,56.3 H1132.4 V61.5 H1123.8 Z" fill="#aab4c6" stroke="none"/>
<path d="M1111.4,83.6 V68.2 H1132.4" stroke-width="1.3"/>
<path d="M1111.8,79.5 L1117,74 L1121,78 L1127,72.5 L1132.2,76.8 V83.4 H1111.8 Z" fill="#d3d7de" stroke="none"/>
<path d="M1111.8,79.5 L1117,74 L1121,78 L1127,72.5 L1132.2,76.8" stroke-width="1"/>
<circle cx="1120" cy="71.4" r="1.3" stroke-width="0.9"/>
<!-- Import / Export / Connections library folders -->
<g id="fold">
<path d="M1154.7,83.6 V58.5 C1154.7,57.2 1155.6,56.4 1156.8,56.4 H1162.2 C1163.4,56.4 1164.2,57.2 1164.2,58.5 V62 H1181.6 V83.6 Z" fill="#fff" stroke-width="1.3"/>
<path d="M1164.5,56.4 H1172.4 V61.4 H1164.5 Z" fill="#8e9ab4" stroke="none"/>
<path d="M1172.4,56.4 H1180.2 C1181,56.4 1181.6,57 1181.6,57.8 V61.4 H1172.4 Z" fill="#b4bccd" stroke="none"/>
<path d="M1165.2,64.5 H1171.5 V80.3 H1165.2 Z M1168.3,64.5 V80.3 M1159,66.8 L1165,70 L1159,73.2 L1165,76.5 L1159,79.5 M1159,66.8 V79.5 M1177.7,66.8 L1171.5,70 L1177.7,73.2 L1171.5,76.5 L1177.7,79.5 M1177.7,66.8 V79.5" fill="none" stroke="#c3cde0" stroke-width="0.8"/>
</g>
<path d="M1174.1,68.3 H1179.9 V76.1 H1182.3 L1177,84.3 L1171.7,76.1 H1174.1 Z" fill="#1f5591" stroke="#fff" stroke-width="2.2"/><path d="M1174.1,68.3 H1179.9 V76.1 H1182.3 L1177,84.3 L1171.7,76.1 H1174.1 Z" fill="#1f5591" stroke="none"/>
<use href="#fold" transform="translate(41.8,0)"/>
<path d="M1218.9,68.3 L1224.4,76.1 H1221.9 V84.3 H1216 V76.1 H1213.5 Z" fill="#1f5591" stroke="#fff" stroke-width="2.2"/><path d="M1218.9,68.3 L1224.4,76.1 H1221.9 V84.3 H1216 V76.1 H1213.5 Z" fill="#1f5591" stroke="none"/>
<g transform="translate(98.5,0)">
<path d="M1154.7,83.6 V58.5 C1154.7,57.2 1155.6,56.4 1156.8,56.4 H1162.2 C1163.4,56.4 1164.2,57.2 1164.2,58.5 V62 H1181.6 V83.6 Z" fill="#fff" stroke-width="1.3"/>
<path d="M1164.5,56.4 H1172.4 V61.4 H1164.5 Z" fill="#6e7fa3" stroke="none"/>
<path d="M1172.4,56.4 H1180.2 C1181,56.4 1181.6,57 1181.6,57.8 V61.4 H1172.4 Z" fill="#9aa6bf" stroke="none"/>
<path d="M1164.8,64.4 H1172.1 V81.2 H1164.8 Z M1168.4,64.4 V81.2 M1158.8,66.6 L1164.8,70 L1158.8,73.2 L1164.8,76.5 L1158.8,79.7 M1158.8,66.6 V79.7 M1178.5,66.6 L1172.1,70 L1178.5,73.2 L1172.1,76.5 L1178.5,79.7 M1178.5,66.6 V79.7" fill="none" stroke="#5a7cb0" stroke-width="0.9"/>
</g>
</g>
<defs><linearGradient id="rbg" x1="0" y1="0" x2="0.3" y2="1"><stop offset="0" stop-color="#fff"/><stop offset="0.5" stop-color="#e4e8ee"/><stop offset="1" stop-color="#a8b2c2"/></linearGradient></defs>
</svg>

<div class="rb" style="left:30px">Reference<br>plane</div>
<div class="rb" style="left:78.5px">Bar</div>
<div class="rb" style="left:118px">Plate</div>
<div class="rb" style="left:158px">Adjust<br>bar</div>
<div class="rb" style="left:200.5px">Trim<br>section</div>
<div class="rb" style="left:243px">End<br>plate</div>
<div class="rb" style="left:283px">Lateral<br>plate</div>
<div class="rb" style="left:324px">Trim<br>plate</div>
<div class="rb" style="left:366px">Modify<br>corners</div>
<div class="rb" style="left:409px">Move</div>
<div class="rb" style="left:448px">Bolts</div>
<div class="rb" style="left:486.5px">Weld</div>
<div class="rb" style="left:527.5px">Round<br>bar</div>
<div class="rb" style="left:583px">Contact<br>relationship</div>
<div class="rb" style="left:644px">Opening</div>
<div class="rb" style="left:698px">Concrete</div>
<div class="rb" style="left:751px">Anchors</div>
<div class="rb" style="left:804.5px">Stiffeners</div>
<div class="rb" style="left:855px">Timber</div>
<div class="rb" style="left:913px">Modelling<br>options</div>
<div class="rb" style="left:967px">View<br>options</div>
<div class="rb" style="left:1016px">Measure</div>
<div class="rb" style="left:1073px">Capture<br>image</div>
<div class="rb" style="left:1119px">Library</div>
<div class="rb" style="left:1168px">Import</div>
<div class="rb" style="left:1210px">Export</div>
<div class="rb" style="left:1268px">Connections<br>library</div>
<svg class="a" style="left:523px;top:118px" width="9" height="5"><path d="M0.5,0.5 H8 L4.25,4.2 Z" fill="#555"/></svg>
<svg class="a" style="left:800px;top:103px" width="9" height="5"><path d="M0.5,0.5 H8 L4.25,4.2 Z" fill="#555"/></svg>
<svg class="a" style="left:850px;top:103px" width="9" height="5"><path d="M0.5,0.5 H8 L4.25,4.2 Z" fill="#555"/></svg>
<svg class="a" style="left:1012px;top:103px" width="9" height="5"><path d="M0.5,0.5 H8 L4.25,4.2 Z" fill="#555"/></svg>
<div class="grp" style="left:438px">Operations</div>
<div class="grp" style="left:962px">Edit</div>
<div class="grp" style="left:1094px">Images</div>
<div class="grp" style="left:1225px">Library</div>
<div class="sep" style="left:879px"></div>
<div class="sep" style="left:1045px"></div>
<div class="sep" style="left:1143px"></div>
<div class="sep" style="left:1307px"></div>

<!-- left toolbar -->


<!-- operations list -->
<div class="a" style="left:8px;top:192px;width:294px;height:23px;background:#f2f2f2"></div>
<div class="a" style="left:301px;top:195px;width:1px;height:16px;background:#d8d8d8"></div>
<div class="t" style="left:127px;top:197px">Operations</div>
<div class="a" style="left:8px;top:215px;width:294px;height:777px;background:#fff"></div>
<div class="a" style="left:8px;top:295px;width:294px;height:20px;background:#cce8ff"></div>
<div class="cb" style="top:219px"><svg class="a" style="left:-1px;top:-1px" width="11" height="11"><use href="#chk"/></svg></div>
<svg class="a" style="left:31px;top:217px" width="16" height="16"><path d="M1.5,2.5 H5 M1.5,2.5 V13.5 H5" fill="none" stroke="#6f93c0" stroke-width="1" stroke-dasharray="1.4,1"/><path d="M6.5,1 L5,15.5" stroke="#4a76ad" stroke-width="1"/><path d="M6,2.5 H15 M6,5 H15 M5.5,11 H15 M5.5,13.5 H15" stroke="#4a76ad" stroke-width="1"/></svg>
<div class="lt" style="top:218px">ADJUSTMENT1 (B2)</div>
<div class="cb" style="top:239px"><svg class="a" style="left:-1px;top:-1px" width="11" height="11"><use href="#chk"/></svg></div>
<svg class="a" style="left:31px;top:237px" width="16" height="16"><path d="M1.5,2.5 H5 M1.5,2.5 V13.5 H5" fill="none" stroke="#6f93c0" stroke-width="1" stroke-dasharray="1.4,1"/><path d="M6.5,1 L5,15.5" stroke="#4a76ad" stroke-width="1"/><path d="M6,2.5 H15 M6,5 H15 M5.5,11 H15 M5.5,13.5 H15" stroke="#4a76ad" stroke-width="1"/></svg>
<div class="lt" style="top:238px">ADJUSTMENT2 (B3)</div>
<div class="cb" style="top:259px"><svg class="a" style="left:-1px;top:-1px" width="11" height="11"><use href="#chk"/></svg></div>
<svg class="a" style="left:31px;top:257px" width="16" height="16"><path d="M7,3.5 H15 M7,6 H15 M1.5,9.5 V13.5 H15 M1.5,9.5 H7 V3.5 M2,11.5 H15" fill="none" stroke="#4a76ad" stroke-width="1"/></svg>
<div class="lt" style="top:258px">SECTION-TRIM1</div>
<div class="cb" style="top:279px"><svg class="a" style="left:-1px;top:-1px" width="11" height="11"><use href="#chk"/></svg></div>
<svg class="a" style="left:31px;top:277px" width="16" height="16"><path d="M7,3.5 H15 M7,6 H15 M1.5,9.5 V13.5 H15 M1.5,9.5 H7 V3.5 M2,11.5 H15" fill="none" stroke="#4a76ad" stroke-width="1"/></svg>
<div class="lt" style="top:278px">SECTION-TRIM2</div>
<div class="cb" style="top:299px"><svg class="a" style="left:-1px;top:-1px" width="11" height="11"><use href="#chk"/></svg></div>
<svg class="a" style="left:31px;top:297px" width="16" height="16"><path d="M4.5,2 H15 L11.5,14.5 H1 Z" fill="#fff" stroke="#3b6aa5" stroke-width="1.1"/><path d="M1.5,14 H11" stroke="#9bb4d4" stroke-width="1"/></svg>
<div class="lt" style="top:298px">PLATE1</div>
<div class="cb" style="top:319px"></div>
<svg class="a" style="left:31px;top:317px" width="16" height="16"><use href="#weld"/></svg>
<div class="lt" style="top:318px">WELD1</div>
<div class="cb" style="top:339px"></div>
<svg class="a" style="left:31px;top:337px" width="16" height="16"><use href="#weld"/></svg>
<div class="lt" style="top:338px">WELD2</div>
<div class="cb" style="top:359px"></div>
<svg class="a" style="left:31px;top:357px" width="16" height="16"><use href="#weld"/></svg>
<div class="lt" style="top:358px">WELD3</div>
<div class="cb" style="top:379px"></div>
<svg class="a" style="left:31px;top:377px" width="16" height="16"><use href="#weld"/></svg>
<div class="lt" style="top:378px">WELD4</div>
<div class="cb" style="top:399px"></div>
<svg class="a" style="left:31px;top:397px" width="16" height="16"><use href="#weld"/></svg>
<div class="lt" style="top:398px">WELD5</div>
<div class="cb" style="top:419px"></div>
<svg class="a" style="left:31px;top:417px" width="16" height="16"><use href="#weld"/></svg>
<div class="lt" style="top:418px">WELD6</div>
<div class="cb" style="top:439px"></div>
<svg class="a" style="left:31px;top:437px" width="16" height="16"><use href="#weld"/></svg>
<div class="lt" style="top:438px">WELD7</div>


<!-- form panels -->
<div class="pan" style="left:310px;top:192px;width:562px;height:49px"></div>
<div class="t" style="left:322px;top:210px">Material</div>
<div class="cmb" style="left:720px;top:204px;width:112px"><span>S275</span><svg class="a" style="right:4px;top:8px" width="10" height="7"><use href="#chev"/></svg></div>
<svg class="a" style="left:840px;top:207px" width="18" height="18"><circle cx="9" cy="9" r="7.6" fill="none" stroke="#333" stroke-width="1.1"/><circle cx="9" cy="5.2" r="1.1" fill="#333"/><path d="M7,8 H9.6 V12.6 M6.8,12.8 H11.4" fill="none" stroke="#333" stroke-width="1.6"/></svg>

<div class="pan" style="left:310px;top:249px;width:562px;height:309px"></div>
<div class="hdr" style="left:311px;top:250px;width:560px;height:18px"></div>
<div class="t" style="left:317px;top:252px">Geometry</div>
<div class="t" style="left:322px;top:284px">Thickness</div>
<div class="inp" style="left:769px;top:279px"><span>10.0</span></div>
<div class="t" style="left:838px;top:284px">mm</div>
<div class="t" style="left:322px;top:314px">Type</div>
<div class="cmb" style="left:734px;top:308px;width:98px"><span>Rectangular</span><svg class="a" style="right:4px;top:8px" width="10" height="7"><use href="#chev"/></svg></div>
<div class="t" style="left:322px;top:344px">X Width</div>
<div class="inp" style="left:769px;top:339px"><span>80.0</span></div>
<div class="t" style="left:838px;top:344px">mm</div>
<div class="t" style="left:322px;top:373px">Y Width</div>
<div class="inp" style="left:769px;top:368px"><span>350.0</span></div>
<div class="t" style="left:838px;top:373px">mm</div>
<svg class="a" style="left:560px;top:402px" width="62" height="62">
<g fill="none" stroke="#777" stroke-width="1">
<path d="M2.5,7 V2.5 H7"/><path d="M26,2.5 H36 M31,2.5 V7"/><path d="M55,2.5 H60.5 V7"/>
<path d="M2.5,26 V36 M2.5,31 H7"/><path d="M60.5,26 V36 M60.5,31 H55"/>
<path d="M2.5,55 V60.5 H7"/><path d="M26,60.5 H36 M31,60.5 V55"/><path d="M55,60.5 H60.5 V55"/>
</g>
<path d="M31,26 V36 M26,31 H36" stroke="#000" stroke-width="2"/>
</svg>

<div class="pan" style="left:310px;top:566px;width:562px;height:241px"></div>
<div class="hdr" style="left:311px;top:567px;width:560px;height:18px"></div>
<div class="t" style="left:317px;top:569px">Position</div>
<svg class="a" style="left:304px;top:571px" width="3" height="16"><path d="M1.5,0 V16" stroke="#999" stroke-width="1.2" stroke-dasharray="1.5,2"/></svg>
<svg class="a" style="left:874px;top:571px" width="3" height="16"><path d="M1.5,0 V16" stroke="#999" stroke-width="1.2" stroke-dasharray="1.5,2"/></svg>
<div class="t" style="left:322px;top:598px">Type</div>
<div class="cmb" style="left:752px;top:596px;width:108px"><span>Attached</span><svg class="a" style="right:4px;top:8px" width="10" height="7"><use href="#chev"/></svg></div>
<div class="t" style="left:322px;top:633px">Attached to</div>
<div class="cmb" style="left:571px;top:627px;width:119px"><span>Bar</span><svg class="a" style="right:4px;top:8px" width="10" height="7"><use href="#chev"/></svg></div>
<div class="cmb" style="left:696px;top:627px;width:67px"><span>B1</span><svg class="a" style="right:4px;top:8px" width="10" height="7"><use href="#chev"/></svg></div>
<div class="cmb" style="left:769px;top:627px;width:91px"><span>Top flange</span><svg class="a" style="right:4px;top:8px" width="10" height="7"><use href="#chev"/></svg></div>
<div class="t" style="left:322px;top:660px">Displacements X/Y/Z</div>
<div class="inp" style="left:615px;top:658px"><span>0.0</span></div>
<div class="inp" style="left:692px;top:658px"><span>0.0</span></div>
<div class="inp" style="left:769px;top:658px"><span>0.0</span></div>
<div class="t" style="left:838px;top:663px">mm</div>
<div class="t" style="left:322px;top:692px">Angle about the local 'z' axis</div>
<div class="inp" style="left:786px;top:687px"><span>0.0</span></div>
<div class="t" style="left:854px;top:689px;font-size:11px">°</div>
<div class="t" style="left:322px;top:722px">Location</div>
<div class="cmb" style="left:724px;top:716px;width:125px"><span>On the front face</span><svg class="a" style="right:4px;top:8px" width="10" height="7"><use href="#chev"/></svg></div>

<!-- viewport -->
<div class="a" style="left:880px;top:188px;width:1040px;height:812px;background:#fff"></div>
<svg class="a" style="left:880px;top:188px" width="1040" height="812" viewBox="880 188 1040 812"><defs><linearGradient id="g0" gradientUnits="userSpaceOnUse" x1="-10.80" y1="21.62" x2="-12.67" y2="25.36"><stop offset="0.0000" stop-color="#8b4646"/><stop offset="0.1498" stop-color="#8a4545"/><stop offset="0.2886" stop-color="#884444"/><stop offset="0.4161" stop-color="#864343"/><stop offset="0.5318" stop-color="#854242"/><stop offset="0.6354" stop-color="#834141"/><stop offset="0.7266" stop-color="#814040"/><stop offset="0.8051" stop-color="#7f3f3f"/><stop offset="0.8707" stop-color="#7d3d3d"/><stop offset="0.9231" stop-color="#7b3c3c"/><stop offset="0.9622" stop-color="#783a3a"/><stop offset="0.9878" stop-color="#753838"/><stop offset="1.0000" stop-color="#6e3434"/></linearGradient><linearGradient id="g1" gradientUnits="userSpaceOnUse" x1="530.65" y1="1061.95" x2="539.97" y2="1080.60"><stop offset="0.0000" stop-color="#9c4c4c"/><stop offset="0.0369" stop-color="#a04e4e"/><stop offset="0.0757" stop-color="#a45151"/><stop offset="0.1160" stop-color="#a75353"/><stop offset="0.1577" stop-color="#aa5454"/><stop offset="0.2007" stop-color="#ac5656"/><stop offset="0.2448" stop-color="#ae5757"/><stop offset="0.2897" stop-color="#b05858"/><stop offset="0.3354" stop-color="#b15959"/><stop offset="0.3815" stop-color="#b25a5a"/><stop offset="0.4279" stop-color="#b25a5a"/><stop offset="0.4744" stop-color="#b25a5a"/><stop offset="0.5208" stop-color="#b15a5a"/><stop offset="0.5669" stop-color="#b05959"/><stop offset="0.6125" stop-color="#af5959"/><stop offset="0.6574" stop-color="#ad5858"/><stop offset="0.7014" stop-color="#ab5757"/><stop offset="0.7443" stop-color="#a85555"/><stop offset="0.7860" stop-color="#a55454"/><stop offset="0.8262" stop-color="#a15252"/><stop offset="0.8648" stop-color="#9e5050"/><stop offset="0.9017" stop-color="#994e4e"/><stop offset="0.9366" stop-color="#954b4b"/><stop offset="0.9694" stop-color="#904949"/><stop offset="1.0000" stop-color="#8b4646"/></linearGradient><linearGradient id="g2" gradientUnits="userSpaceOnUse" x1="460.25" y1="921.07" x2="462.68" y2="925.94"><stop offset="0.0000" stop-color="#703636"/><stop offset="0.0032" stop-color="#753838"/><stop offset="0.0221" stop-color="#793b3b"/><stop offset="0.0563" stop-color="#7e3d3d"/><stop offset="0.1058" stop-color="#823f3f"/><stop offset="0.1703" stop-color="#864141"/><stop offset="0.2494" stop-color="#8a4343"/><stop offset="0.3427" stop-color="#8e4545"/><stop offset="0.4496" stop-color="#914747"/><stop offset="0.5695" stop-color="#954848"/><stop offset="0.7017" stop-color="#984a4a"/><stop offset="0.8455" stop-color="#9a4b4b"/><stop offset="1.0000" stop-color="#9c4c4c"/></linearGradient><linearGradient id="g3" gradientUnits="userSpaceOnUse" x1="-12.11" y1="24.24" x2="-23.77" y2="47.56"><stop offset="0.0000" stop-color="#9c4c4c"/><stop offset="0.0369" stop-color="#a04e4e"/><stop offset="0.0757" stop-color="#a45151"/><stop offset="0.1160" stop-color="#a75353"/><stop offset="0.1577" stop-color="#aa5454"/><stop offset="0.2007" stop-color="#ac5656"/><stop offset="0.2448" stop-color="#ae5757"/><stop offset="0.2897" stop-color="#b05858"/><stop offset="0.3354" stop-color="#b15959"/><stop offset="0.3815" stop-color="#b25a5a"/><stop offset="0.4279" stop-color="#b25a5a"/><stop offset="0.4744" stop-color="#b25a5a"/><stop offset="0.5208" stop-color="#b15a5a"/><stop offset="0.5669" stop-color="#b05959"/><stop offset="0.6125" stop-color="#af5959"/><stop offset="0.6574" stop-color="#ad5858"/><stop offset="0.7014" stop-color="#ab5757"/><stop offset="0.7443" stop-color="#a85555"/><stop offset="0.7860" stop-color="#a55454"/><stop offset="0.8262" stop-color="#a15252"/><stop offset="0.8648" stop-color="#9e5050"/><stop offset="0.9017" stop-color="#994e4e"/><stop offset="0.9366" stop-color="#954b4b"/><stop offset="0.9694" stop-color="#904949"/><stop offset="1.0000" stop-color="#8b4646"/></linearGradient><linearGradient id="g4" gradientUnits="userSpaceOnUse" x1="97.19" y1="-194.49" x2="94.15" y2="-188.41"><stop offset="0.0000" stop-color="#703636"/><stop offset="0.0032" stop-color="#753838"/><stop offset="0.0221" stop-color="#793b3b"/><stop offset="0.0563" stop-color="#7e3d3d"/><stop offset="0.1058" stop-color="#823f3f"/><stop offset="0.1703" stop-color="#864141"/><stop offset="0.2494" stop-color="#8a4343"/><stop offset="0.3427" stop-color="#8e4545"/><stop offset="0.4496" stop-color="#914747"/><stop offset="0.5695" stop-color="#954848"/><stop offset="0.7017" stop-color="#984a4a"/><stop offset="0.8455" stop-color="#9a4b4b"/><stop offset="1.0000" stop-color="#9c4c4c"/></linearGradient><linearGradient id="g5" gradientUnits="userSpaceOnUse" x1="530.65" y1="1061.95" x2="539.97" y2="1080.60"><stop offset="0.0000" stop-color="#9c4c4c"/><stop offset="0.0369" stop-color="#a04e4e"/><stop offset="0.0757" stop-color="#a45151"/><stop offset="0.1160" stop-color="#a75353"/><stop offset="0.1577" stop-color="#aa5454"/><stop offset="0.2007" stop-color="#ac5656"/><stop offset="0.2448" stop-color="#ae5757"/><stop offset="0.2897" stop-color="#b05858"/><stop offset="0.3354" stop-color="#b15959"/><stop offset="0.3815" stop-color="#b25a5a"/><stop offset="0.4279" stop-color="#b25a5a"/><stop offset="0.4744" stop-color="#b25a5a"/><stop offset="0.5208" stop-color="#b15a5a"/><stop offset="0.5669" stop-color="#b05959"/><stop offset="0.6125" stop-color="#af5959"/><stop offset="0.6574" stop-color="#ad5858"/><stop offset="0.7014" stop-color="#ab5757"/><stop offset="0.7443" stop-color="#a85555"/><stop offset="0.7860" stop-color="#a55454"/><stop offset="0.8262" stop-color="#a15252"/><stop offset="0.8648" stop-color="#9e5050"/><stop offset="0.9017" stop-color="#994e4e"/><stop offset="0.9366" stop-color="#954b4b"/><stop offset="0.9694" stop-color="#904949"/><stop offset="1.0000" stop-color="#8b4646"/></linearGradient><linearGradient id="g6" gradientUnits="userSpaceOnUse" x1="460.25" y1="921.07" x2="462.68" y2="925.94"><stop offset="0.0000" stop-color="#703636"/><stop offset="0.0032" stop-color="#753838"/><stop offset="0.0221" stop-color="#793b3b"/><stop offset="0.0563" stop-color="#7e3d3d"/><stop offset="0.1058" stop-color="#823f3f"/><stop offset="0.1703" stop-color="#864141"/><stop offset="0.2494" stop-color="#8a4343"/><stop offset="0.3427" stop-color="#8e4545"/><stop offset="0.4496" stop-color="#914747"/><stop offset="0.5695" stop-color="#954848"/><stop offset="0.7017" stop-color="#984a4a"/><stop offset="0.8455" stop-color="#9a4b4b"/><stop offset="1.0000" stop-color="#9c4c4c"/></linearGradient></defs><polygon points="940.61,578.78 1727.57,972.02 1858.73,906.48 1071.77,513.24" fill="#8b4646" stroke="#5a2b2b" stroke-width="0.9" stroke-linejoin="round"/>
<polygon points="940.61,590.22 1727.57,983.46 1727.57,972.02 940.61,578.78" fill="#9c4c4c" stroke="#5a2b2b" stroke-width="0.9" stroke-linejoin="round"/>
<polygon points="1014.34,538.54 1014.92,538.78 1015.52,538.96 1016.15,539.09 1016.80,539.17 1017.46,539.20 1018.14,539.17 1018.83,539.09 1019.53,538.96 1020.25,538.77 1020.96,538.53 1021.69,538.25 1022.41,537.91 1809.37,931.15 1808.65,931.48 1807.92,931.77 1807.21,932.01 1806.49,932.19 1805.79,932.32 1805.10,932.41 1804.42,932.43 1803.76,932.41 1803.11,932.33 1802.48,932.20 1801.88,932.02 1801.30,931.78" fill="url(#g0)"/>
<polygon points="1360.32,614.05 1771.29,408.70 1858.73,452.39 1447.76,657.75" fill="#8b4646" stroke="#5a2b2b" stroke-width="0.9" stroke-linejoin="round"/>
<polygon points="1447.76,666.83 1858.73,461.47 1858.73,452.39 1447.76,657.75" fill="#9c4c4c" stroke="#5a2b2b" stroke-width="0.9" stroke-linejoin="round"/>
<polygon points="1406.49,441.50 1817.46,236.14 1817.46,431.77 1406.49,637.12" fill="#9c4c4c"/>
<polygon points="1406.49,624.29 1406.51,625.14 1406.58,626.01 1406.69,626.90 1406.85,627.79 1407.05,628.70 1407.29,629.60 1407.57,630.51 1407.90,631.41 1408.26,632.30 1408.66,633.19 1409.09,634.05 1409.56,634.90 1410.06,635.72 1410.60,636.52 1411.15,637.29 1411.74,638.03 1412.34,638.72 1412.97,639.38 1413.61,640.00 1414.27,640.57 1414.94,641.10 1415.61,641.57 1416.30,642.00 1416.98,642.37 1827.95,437.01 1827.26,436.64 1826.58,436.21 1825.90,435.74 1825.24,435.21 1824.58,434.64 1823.94,434.03 1823.31,433.37 1822.70,432.67 1822.12,431.93 1821.56,431.17 1821.03,430.37 1820.53,429.54 1820.06,428.70 1819.63,427.83 1819.23,426.95 1818.86,426.05 1818.54,425.15 1818.26,424.25 1818.02,423.34 1817.82,422.44 1817.66,421.54 1817.55,420.66 1817.48,419.79 1817.46,418.94" fill="url(#g1)"/>
<polygon points="1406.49,454.32 1406.52,453.37 1406.61,452.45 1406.76,451.57 1406.97,450.74 1407.23,449.96 1407.55,449.23 1407.93,448.56 1408.35,447.96 1408.83,447.42 1409.35,446.95 1409.92,446.55 1410.52,446.23 1821.49,240.87 1820.88,241.20 1820.32,241.59 1819.80,242.06 1819.32,242.60 1818.89,243.21 1818.52,243.87 1818.20,244.60 1817.93,245.38 1817.73,246.21 1817.58,247.09 1817.49,248.01 1817.46,248.97" fill="url(#g2)"/>
<path d="M0.17,0.45 C0.42,0.45 0.55,0.56 0.55,0.71 C0.55,0.9 0.42,1 0.25,1 H0 V0 H0.2 C0.4,0 0.5,0.09 0.5,0.21 C0.5,0.35 0.38,0.45 0.17,0.45 H0" transform="matrix(41.5262,-20.7503,0.0000,50.7679,1589.2876,417.2376)" fill="none" stroke="#151515" stroke-width="0.116"/><path d="M0.01,0.2 C0.08,0.05 0.18,0 0.28,0 C0.42,0 0.49,0.1 0.49,0.22 C0.49,0.36 0.37,0.46 0.17,0.46 C0.4,0.46 0.53,0.56 0.53,0.71 C0.53,0.89 0.39,1 0.22,1 C0.12,1 0.04,0.97 0,0.93" transform="matrix(41.5262,-20.7503,0.0000,50.7679,1626.3621,398.7118)" fill="none" stroke="#151515" stroke-width="0.116"/>
<polygon points="1430.27,374.38 1771.29,203.98 1858.73,247.67 1517.71,418.08" fill="#8b4646" stroke="#5a2b2b" stroke-width="0.9" stroke-linejoin="round"/>
<polygon points="1517.71,427.16 1858.73,256.76 1858.73,247.67 1517.71,418.08" fill="#9c4c4c" stroke="#5a2b2b" stroke-width="0.9" stroke-linejoin="round"/>
<polygon points="1430.27,383.47 1517.71,427.16 1517.71,418.08 1430.27,374.38" fill="#9c4c4c" stroke="#5a2b2b" stroke-width="0.9" stroke-linejoin="round"/>
<polygon points="1003.09,249.74 1790.05,642.98 1790.05,940.80 1003.09,547.56" fill="#9c4c4c"/>
<polygon points="1003.09,531.53 1003.06,532.59 1002.97,533.68 1002.83,534.78 1002.64,535.90 1002.39,537.03 1002.09,538.16 1001.73,539.30 1001.33,540.42 1000.88,541.54 1000.38,542.65 999.83,543.73 999.24,544.79 998.62,545.82 997.95,546.81 997.26,547.77 996.53,548.69 995.77,549.57 994.99,550.39 994.19,551.16 993.36,551.88 992.53,552.53 991.68,553.13 990.83,553.66 989.97,554.12 1776.93,947.36 1777.79,946.89 1778.64,946.36 1779.49,945.77 1780.32,945.11 1781.15,944.40 1781.95,943.63 1782.73,942.80 1783.49,941.93 1784.22,941.01 1784.91,940.05 1785.58,939.05 1786.20,938.02 1786.79,936.97 1787.34,935.88 1787.84,934.78 1788.29,933.66 1788.69,932.53 1789.05,931.40 1789.35,930.27 1789.60,929.14 1789.79,928.02 1789.93,926.92 1790.02,925.83 1790.05,924.77" fill="url(#g3)"/>
<polygon points="1003.09,265.78 1003.05,264.58 1002.94,263.43 1002.75,262.34 1002.49,261.30 1002.16,260.32 1001.76,259.41 1001.29,258.57 1000.76,257.82 1000.16,257.15 999.51,256.56 998.80,256.06 998.04,255.66 1785.00,648.90 1785.76,649.30 1786.47,649.80 1787.12,650.38 1787.72,651.06 1788.25,651.81 1788.72,652.65 1789.12,653.56 1789.45,654.53 1789.71,655.57 1789.90,656.67 1790.01,657.82 1790.05,659.01" fill="url(#g4)"/>
<path d="M0.17,0.45 C0.42,0.45 0.55,0.56 0.55,0.71 C0.55,0.9 0.42,1 0.25,1 H0 V0 H0.2 C0.4,0 0.5,0.09 0.5,0.21 C0.5,0.35 0.38,0.45 0.17,0.45 H0" transform="matrix(61.3490,30.6556,0.0000,75.0024,1549.7340,621.9597)" fill="none" stroke="#151515" stroke-width="0.116" stroke-linecap="butt" stroke-linejoin="miter"/><path d="M-0.25,0.17 L0,0 V1.12" transform="matrix(61.3490,30.6556,0.0000,75.0024,1627.7572,655.2074)" fill="none" stroke="#151515" stroke-width="0.116" stroke-linecap="butt" stroke-linejoin="bevel"/><path d="M0.17,0.45 C0.42,0.45 0.55,0.56 0.55,0.71 C0.55,0.9 0.42,1 0.25,1 H0 V0 H0.2 C0.4,0 0.5,0.09 0.5,0.21 C0.5,0.35 0.38,0.45 0.17,0.45 H0" transform="matrix(61.3490,30.6556,0.0000,75.0024,1155.9916,425.2101)" fill="none" stroke="#151515" stroke-width="0.116" stroke-linecap="butt" stroke-linejoin="miter"/><path d="M-0.25,0.17 L0,0 V1.12" transform="matrix(61.3490,30.6556,0.0000,75.0024,1234.0149,458.4578)" fill="none" stroke="#151515" stroke-width="0.116" stroke-linecap="butt" stroke-linejoin="bevel"/>
<polygon points="940.61,823.78 1351.58,618.42 1439.02,662.11 1028.05,867.47" fill="#8b4646" stroke="#5a2b2b" stroke-width="0.9" stroke-linejoin="round"/>
<polygon points="1028.05,876.56 1439.02,671.20 1439.02,662.11 1028.05,867.47" fill="#9c4c4c" stroke="#5a2b2b" stroke-width="0.9" stroke-linejoin="round"/>
<polygon points="986.78,651.22 1397.75,445.86 1397.75,641.49 986.78,846.85" fill="#9c4c4c"/>
<polygon points="986.78,834.02 986.80,834.87 986.87,835.74 986.98,836.62 987.14,837.52 987.34,838.42 987.58,839.33 987.86,840.24 988.18,841.14 988.55,842.03 988.95,842.91 989.38,843.78 989.85,844.63 990.35,845.45 990.88,846.25 991.44,847.02 992.02,847.75 992.63,848.45 993.26,849.11 993.90,849.73 994.56,850.30 995.22,850.82 995.90,851.30 996.58,851.72 997.27,852.09 1408.24,646.73 1407.55,646.36 1406.87,645.94 1406.19,645.47 1405.52,644.94 1404.87,644.37 1404.22,643.75 1403.60,643.09 1402.99,642.39 1402.41,641.66 1401.85,640.89 1401.32,640.09 1400.82,639.27 1400.35,638.42 1399.91,637.56 1399.51,636.67 1399.15,635.78 1398.83,634.88 1398.55,633.97 1398.30,633.07 1398.10,632.16 1397.95,631.27 1397.84,630.38 1397.77,629.51 1397.75,628.66" fill="url(#g5)"/>
<polygon points="986.78,664.05 986.81,663.10 986.90,662.18 987.05,661.30 987.25,660.47 987.52,659.68 987.84,658.96 988.21,658.29 988.64,657.68 989.12,657.15 989.64,656.68 990.20,656.28 990.81,655.96 1401.78,450.60 1401.17,450.92 1400.61,451.32 1400.08,451.79 1399.61,452.33 1399.18,452.93 1398.81,453.60 1398.49,454.33 1398.22,455.11 1398.02,455.94 1397.87,456.82 1397.78,457.74 1397.75,458.69" fill="url(#g6)"/>
<polyline points="1397.75,450.35 1397.75,628.66 1397.84,630.38 1398.10,632.16 1398.55,633.97 1399.15,635.78 1399.91,637.56 1400.82,639.27 1401.85,640.89 1402.99,642.39 1404.22,643.75 1405.52,644.94 1406.87,645.94 1408.24,646.73 1439.02,662.11" fill="none" stroke="#5a2b2b" stroke-width="0.9"/>
<polygon points="940.61,269.52 1727.57,662.76 1858.73,597.22 1071.77,203.98" fill="#8b4646" stroke="#5a2b2b" stroke-width="0.9" stroke-linejoin="round"/>
<polygon points="940.61,280.96 1727.57,674.20 1727.57,662.76 940.61,269.52" fill="#9c4c4c" stroke="#5a2b2b" stroke-width="0.9" stroke-linejoin="round"/>
<path d="M0.17,0.45 C0.42,0.45 0.55,0.56 0.55,0.71 C0.55,0.9 0.42,1 0.25,1 H0 V0 H0.2 C0.4,0 0.5,0.09 0.5,0.21 C0.5,0.35 0.38,0.45 0.17,0.45 H0" transform="matrix(41.5262,-20.7503,0.0000,50.7679,1160.8316,630.9057)" fill="none" stroke="#151515" stroke-width="0.116"/><path d="M0.02,0.25 C0.06,0.08 0.17,0 0.28,0 C0.42,0 0.5,0.1 0.5,0.26 C0.5,0.48 0.2,0.72 0,1 H0.54" transform="matrix(41.5262,-20.7503,0.0000,50.7679,1197.9061,612.3799)" fill="none" stroke="#151515" stroke-width="0.116"/>
<polygon points="940.61,619.07 1281.63,448.66 1369.07,492.36 1028.05,662.76" fill="#8b4646" stroke="#5a2b2b" stroke-width="0.9" stroke-linejoin="round"/>
<polygon points="1028.05,671.84 1369.07,501.44 1369.07,492.36 1028.05,662.76" fill="#9c4c4c" stroke="#5a2b2b" stroke-width="0.9" stroke-linejoin="round"/>
<polygon points="940.61,619.07 1028.05,662.76 1028.05,671.84 997.27,656.46 995.22,655.69 993.26,655.43 991.44,655.71 989.85,656.51 988.55,657.81 987.58,659.54 986.98,661.65 986.78,664.05 986.78,834.02 986.98,836.62 987.58,839.33 988.55,842.03 989.85,844.63 991.44,847.02 993.26,849.11 995.22,850.82 997.27,852.09 1028.05,867.47 1028.05,876.56 940.61,832.87 940.61,823.78 971.39,839.16 973.44,839.94 975.40,840.19 977.22,839.91 978.81,839.11 980.11,837.82 981.08,836.08 981.68,833.98 981.88,831.57 981.88,661.60 981.68,659.00 981.08,656.29 980.11,653.59 978.81,651.00 977.22,648.61 975.40,646.51 973.44,644.80 971.39,643.53 940.61,628.15" fill="#9c4c4c" stroke="#5a2b2b" stroke-width="0.9" stroke-linejoin="round"/>
<polygon points="1727.57,662.76 1858.73,597.22 1858.73,608.66 1809.37,633.32 1806.81,634.91 1804.35,637.05 1802.08,639.67 1800.10,642.65 1798.46,645.90 1797.25,649.28 1796.51,652.66 1796.25,655.91 1796.25,921.66 1796.51,924.67 1797.25,927.30 1798.46,929.47 1800.10,931.08 1802.08,932.08 1804.35,932.43 1806.81,932.12 1809.37,931.15 1858.73,906.48 1858.73,917.92 1727.57,983.46 1727.57,972.02 1776.93,947.36 1779.49,945.77 1781.95,943.63 1784.22,941.01 1786.20,938.02 1787.84,934.78 1789.05,931.40 1789.79,928.02 1790.05,924.77 1790.05,659.01 1789.79,656.01 1789.05,653.38 1787.84,651.21 1786.20,649.59 1784.22,648.59 1781.95,648.24 1779.49,648.56 1776.93,649.53 1727.57,674.20" fill="#9c4c4c" stroke="#5a2b2b" stroke-width="0.9" stroke-linejoin="round"/>
<polygon points="1211.67,481.67 1281.63,516.62 1587.67,363.69 1517.71,328.74" fill="#535c66" stroke="#3b4148" stroke-width="0.9" stroke-linejoin="round"/>
<polygon points="1211.67,492.36 1281.63,527.31 1281.63,516.62 1211.67,481.67" fill="#5f6874" stroke="#3b4148" stroke-width="0.9" stroke-linejoin="round"/>
<polygon points="1281.63,527.31 1587.67,374.38 1587.67,363.69 1281.63,516.62" fill="#5f6874" stroke="#3b4148" stroke-width="0.9" stroke-linejoin="round"/>
<text x="1400.6" y="422.5" font-family="Liberation Sans" font-size="5.5" fill="#2a2f36" transform="rotate(26 1400.6 422.5)" text-anchor="middle" opacity="0.75">PLATE1</text>
<line x1="1434.9" y1="449" x2="1470" y2="466.5" stroke="#e01010" stroke-width="1.3"/>
<polygon points="1487.00,475.50 1466.12,469.76 1469.88,462.24" fill="#e01010"/>
<polygon points="1487.00,475.50 1469.88,462.24 1468.00,466.00" fill="#600000" opacity="0.55"/>
<text x="1496" y="482.5" font-family="Liberation Sans" font-size="11" fill="#e02020" text-anchor="middle">X</text>
<line x1="1399.8" y1="422.5" x2="1399.8" y2="346" stroke="#2a2ae0" stroke-width="2"/>
<polygon points="1399.80,325.60 1403.90,348.40 1395.70,348.40" fill="#1010e0"/>
<polygon points="1399.80,325.60 1395.70,348.40 1399.80,348.40" fill="#000060" opacity="0.55"/>
<text x="1399.8" y="317.5" font-family="Liberation Sans" font-size="11" fill="#4a4aff" text-anchor="middle">Z</text>
<line x1="905.4" y1="945.6" x2="905.4" y2="917" stroke="#0000ff" stroke-width="2.2"/>
<polygon points="905.40,908.40 909.40,919.50 901.40,919.50" fill="#0000e8"/>
<polygon points="905.40,908.40 901.40,919.50 905.40,919.50" fill="#000050" opacity="0.55"/>
<line x1="905.4" y1="945.6" x2="928" y2="934.4" stroke="#00e000" stroke-width="2.2"/>
<polygon points="935.80,930.80 928.08,938.47 924.92,931.13" fill="#00d800"/>
<polygon points="935.80,930.80 924.92,931.13 926.50,934.80" fill="#003000" opacity="0.55"/>
<line x1="905.4" y1="945.6" x2="928" y2="957" stroke="#b00000" stroke-width="2.2"/>
<polygon points="935.80,961.10 924.53,959.99 928.07,952.81" fill="#b00000"/>
<polygon points="935.80,961.10 928.07,952.81 926.30,956.40" fill="#300000" opacity="0.55"/>
<text x="905.1" y="903.8" font-family="Liberation Sans" font-weight="bold" font-size="13" fill="#0000ff" text-anchor="middle">Z</text>
<text x="942.8" y="930.7" font-family="Liberation Sans" font-weight="bold" font-size="13" fill="#00dd00" text-anchor="middle">Y</text>
<text x="942.8" y="968.3" font-family="Liberation Sans" font-weight="bold" font-size="13" fill="#ff0000" text-anchor="middle">X</text></svg>


<!-- bottom bar -->
<div class="a" style="left:0;top:1000px;width:1920px;height:1px;background:#d0d0d0"></div>
<div class="a" style="left:0;top:1001px;width:1920px;height:39px;background:#e8e8e8"></div>
<div class="a" style="left:926px;top:1008px;width:69px;height:25px;border:2px solid #0078d7;background:#e1e1e1"></div>
<div class="t" style="left:941px;top:1014px">Accept</div>
<div class="a" style="left:941px;top:1027px;width:8px;height:1px;background:#000"></div>
</body></html>
